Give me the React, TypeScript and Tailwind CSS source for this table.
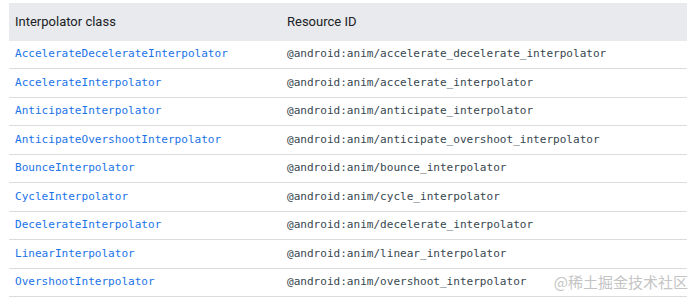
import React from 'react'

const rows: [string, string][] = [
  ['AccelerateDecelerateInterpolator', '@android:anim/accelerate_decelerate_interpolator'],
  ['AccelerateInterpolator', '@android:anim/accelerate_interpolator'],
  ['AnticipateInterpolator', '@android:anim/anticipate_interpolator'],
  ['AnticipateOvershootInterpolator', '@android:anim/anticipate_overshoot_interpolator'],
  ['BounceInterpolator', '@android:anim/bounce_interpolator'],
  ['CycleInterpolator', '@android:anim/cycle_interpolator'],
  ['DecelerateInterpolator', '@android:anim/decelerate_interpolator'],
  ['LinearInterpolator', '@android:anim/linear_interpolator'],
  ['OvershootInterpolator', '@android:anim/overshoot_interpolator'],
]

export default function App() {
  return (
    <div className="relative h-[304px] w-[700px] overflow-hidden bg-white pl-[9px] pt-[3px] font-['Roboto',sans-serif]">
      <div className="w-[678px]">
        {/* Header */}
        <div className="flex h-[38px] items-center bg-[#e8eaed] text-[13px] text-[#202124]">
          <div className="w-[272px] pl-[6px]">Interpolator class</div>
          <div className="pl-[6px]">Resource ID</div>
        </div>

        {/* Rows */}
        {rows.map(([cls, res]) => (
          <div
            key={cls}
            className="flex h-[28.45px] items-center border-b border-[#dadce0] font-['DejaVu_Sans_Mono','Liberation_Mono',monospace] text-[11.05px]"
          >
            <div className="w-[272px] pl-[6px] text-[#1a73e8]">{cls}</div>
            <div className="pl-[6px] text-[#37474f]">{res}</div>
          </div>
        ))}
      </div>

      {/* Watermark */}
      <div className="absolute right-[12px] top-[271px] font-['Noto_Sans_CJK_SC',sans-serif] text-[15px] leading-[22px] text-[#c4c4c4]">
        @稀土掘金技术社区
      </div>
    </div>
  )
}
